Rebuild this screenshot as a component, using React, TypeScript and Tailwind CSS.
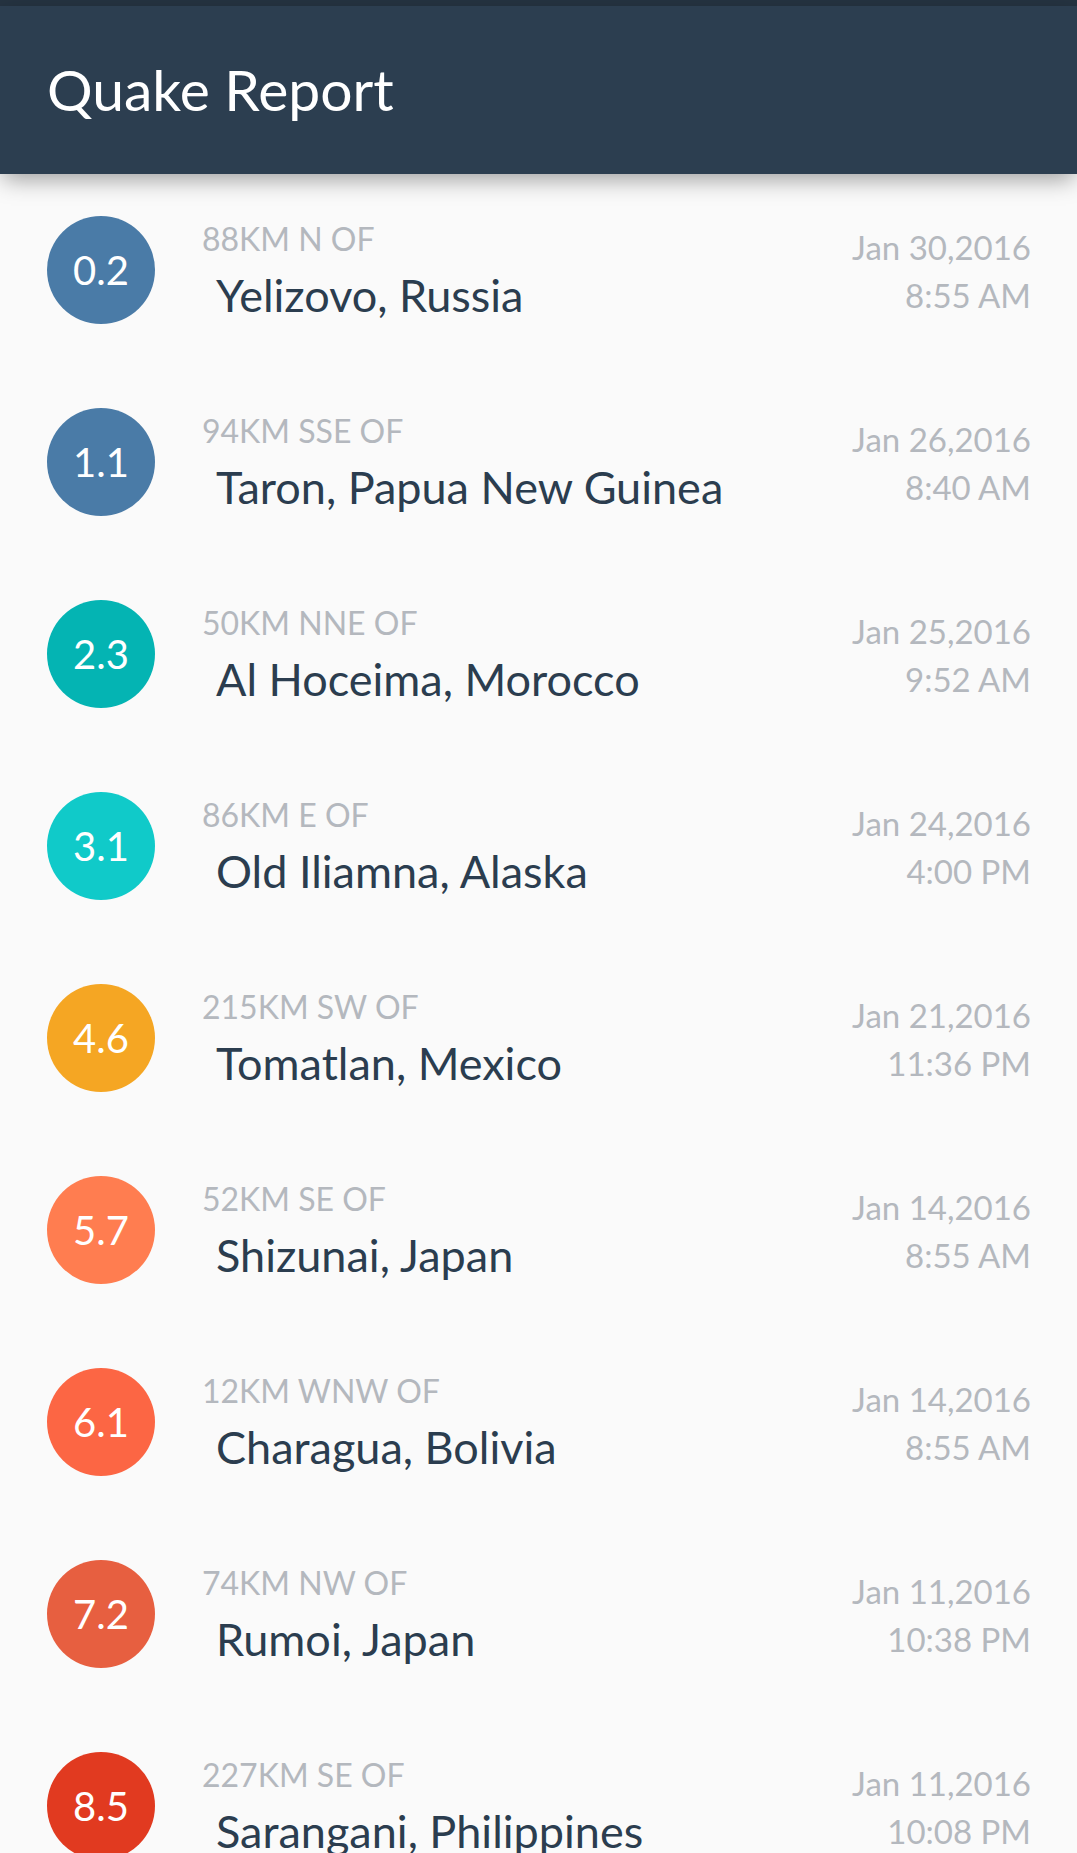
const quakes = [
  { mag: "0.2", color: "bg-[#4A7BA7]", offset: "88KM N OF", place: "Yelizovo, Russia", date: "Jan 30,2016", time: "8:55 AM" },
  { mag: "1.1", color: "bg-[#4A7BA7]", offset: "94KM SSE OF", place: "Taron, Papua New Guinea", date: "Jan 26,2016", time: "8:40 AM" },
  { mag: "2.3", color: "bg-[#04B4B3]", offset: "50KM NNE OF", place: "Al Hoceima, Morocco", date: "Jan 25,2016", time: "9:52 AM" },
  { mag: "3.1", color: "bg-[#10CAC9]", offset: "86KM E OF", place: "Old Iliamna, Alaska", date: "Jan 24,2016", time: "4:00 PM" },
  { mag: "4.6", color: "bg-[#F5A623]", offset: "215KM SW OF", place: "Tomatlan, Mexico", date: "Jan 21,2016", time: "11:36 PM" },
  { mag: "5.7", color: "bg-[#FF7D50]", offset: "52KM SE OF", place: "Shizunai, Japan", date: "Jan 14,2016", time: "8:55 AM" },
  { mag: "6.1", color: "bg-[#FC6644]", offset: "12KM WNW OF", place: "Charagua, Bolivia", date: "Jan 14,2016", time: "8:55 AM" },
  { mag: "7.2", color: "bg-[#E75F40]", offset: "74KM NW OF", place: "Rumoi, Japan", date: "Jan 11,2016", time: "10:38 PM" },
  { mag: "8.5", color: "bg-[#E13A20]", offset: "227KM SE OF", place: "Sarangani, Philippines", date: "Jan 11,2016", time: "10:08 PM" },
];

const App = () => {
  return (
    <div className="h-[1853px] overflow-hidden bg-[#FAFAFA] font-['Lato',sans-serif]">
      <div className="h-[6px] bg-[#253341]" />
      <header className="relative z-10 flex h-[168px] items-center bg-[#2C3E50] pb-[1px] pl-[47px] shadow-[0_8px_22px_-3px_rgba(0,0,0,0.38)]">
        <h1 className="text-[57px] leading-none text-white">Quake Report</h1>
      </header>
      <main>
        {quakes.map((quake) => (
          <div key={quake.place} className="flex h-[192px] items-start pl-[47px] pr-[46px]">
            <div className={`mt-[42px] flex h-[108px] w-[108px] shrink-0 items-center justify-center rounded-full text-[40px] text-white ${quake.color}`}>
              {quake.mag}
            </div>
            <div className="ml-[47px] min-w-0 flex-1 pt-[41px]">
              <p className="h-[48px] text-[32px] leading-[48px] text-[#B4B8BE]">{quake.offset}</p>
              <p className="ml-[14px] h-[65px] text-[45px] leading-[65px] text-[#2B3D4F]">{quake.place}</p>
            </div>
            <div className="pt-[49px] text-right text-[33px] leading-[48px] text-[#B4B8BE]">
              <p>{quake.date}</p>
              <p>{quake.time}</p>
            </div>
          </div>
        ))}
      </main>
    </div>
  );
};

export default App;
